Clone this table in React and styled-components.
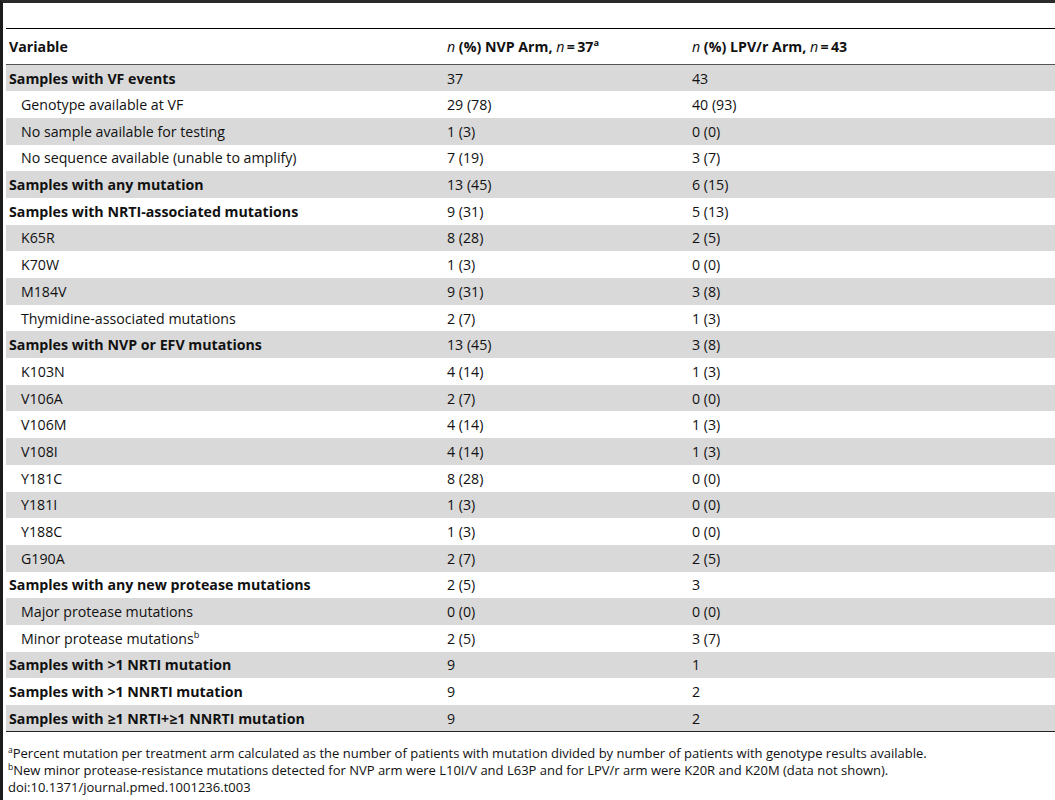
import React from 'react';
import styled, { createGlobalStyle } from 'styled-components';

const GlobalStyle = createGlobalStyle`
    html, body {
        margin: 0;
        padding: 0;
        background: #fff;
    }
    body {
        font-family: "Open Sans", "Liberation Sans", sans-serif;
        color: #111;
    }
`

const Page = styled.div`
    box-sizing: border-box;
    width: 1055px;
    min-height: 800px;
    border-left: 3px solid #1c1c1c;
    border-top: 3px solid #2a2a2a;
    padding-left: 3px;
`

const Caption = styled.div`
    height: 25px;
`

const Table = styled.table`
    width: 100%;
    border-collapse: collapse;
    table-layout: fixed;
    border-top: 1px solid #000;
    border-bottom: 1px solid #222;
    font-size: 14.2px;
`

const HeadRow = styled.tr`
    height: 36px;
    border-bottom: 1px solid #555;
`

const HeadCell = styled.th`
    text-align: left;
    font-weight: 700;
    padding: 0 0 0 3px;
    width: ${({ $width }) => $width || 'auto'};
    white-space: nowrap;

    i {
        font-weight: 400;
    }
`

const Row = styled.tr`
    height: 26.7px;
    background: ${({ $shade }) => $shade ? '#d9d9d9' : '#fff'};
`

const Cell = styled.td`
    padding: 0 0 0 ${({ $indent }) => $indent ? '15px' : '3px'};
    font-weight: ${({ $bold }) => $bold ? 700 : 400};
    white-space: nowrap;
`

const Sup = styled.sup`
    font-size: 0.65em;
    line-height: 0;
    vertical-align: 0.6em;
`

const Notes = styled.div`
    padding: 13px 0 0 2px;
    font-size: 13px;
    line-height: 17px;
`

const rows = [
    ['Samples with VF events', '37', '43', true],
    ['Genotype available at VF', '29 (78)', '40 (93)'],
    ['No sample available for testing', '1 (3)', '0 (0)'],
    ['No sequence available (unable to amplify)', '7 (19)', '3 (7)'],
    ['Samples with any mutation', '13 (45)', '6 (15)', true],
    ['Samples with NRTI-associated mutations', '9 (31)', '5 (13)', true],
    ['K65R', '8 (28)', '2 (5)'],
    ['K70W', '1 (3)', '0 (0)'],
    ['M184V', '9 (31)', '3 (8)'],
    ['Thymidine-associated mutations', '2 (7)', '1 (3)'],
    ['Samples with NVP or EFV mutations', '13 (45)', '3 (8)', true],
    ['K103N', '4 (14)', '1 (3)'],
    ['V106A', '2 (7)', '0 (0)'],
    ['V106M', '4 (14)', '1 (3)'],
    ['V108I', '4 (14)', '1 (3)'],
    ['Y181C', '8 (28)', '0 (0)'],
    ['Y181I', '1 (3)', '0 (0)'],
    ['Y188C', '1 (3)', '0 (0)'],
    ['G190A', '2 (7)', '2 (5)'],
    ['Samples with any new protease mutations', '2 (5)', '3', true],
    ['Major protease mutations', '0 (0)', '0 (0)'],
    ['Minor protease mutations', '2 (5)', '3 (7)', false, 'b'],
    ['Samples with >1 NRTI mutation', '9', '1', true],
    ['Samples with >1 NNRTI mutation', '9', '2', true],
    ['Samples with ≥1 NRTI+≥1 NNRTI mutation', '9', '2', true],
]

export default function App() {
    return (
        <>
            <GlobalStyle />
            <Page>
                <Caption />
                <Table>
                    <thead>
                        <HeadRow>
                            <HeadCell $width='435px'>Variable</HeadCell>
                            <HeadCell $width='242px'>
                                <i>n</i> (%) NVP Arm, <i>n</i>{'\u2009=\u200937'}<Sup>a</Sup>
                            </HeadCell>
                            <HeadCell>
                                <i>n</i> (%) LPV/r Arm, <i>n</i>{'\u2009=\u200943'}
                            </HeadCell>
                        </HeadRow>
                    </thead>
                    <tbody>
                        {rows.map(([label, nvp, lpv, bold, note], i) => (
                            <Row key={label} $shade={i % 2 === 0}>
                                <Cell $bold={bold} $indent={!bold}>
                                    {label}{note && <Sup>{note}</Sup>}
                                </Cell>
                                <Cell>{nvp}</Cell>
                                <Cell>{lpv}</Cell>
                            </Row>
                        ))}
                    </tbody>
                </Table>
                <Notes>
                    <div><Sup>a</Sup>Percent mutation per treatment arm calculated as the number of patients with mutation divided by number of patients with genotype results available.</div>
                    <div><Sup>b</Sup>New minor protease-resistance mutations detected for NVP arm were L10I/V and L63P and for LPV/r arm were K20R and K20M (data not shown).</div>
                    <div>doi:10.1371/journal.pmed.1001236.t003</div>
                </Notes>
            </Page>
        </>
    )
}
